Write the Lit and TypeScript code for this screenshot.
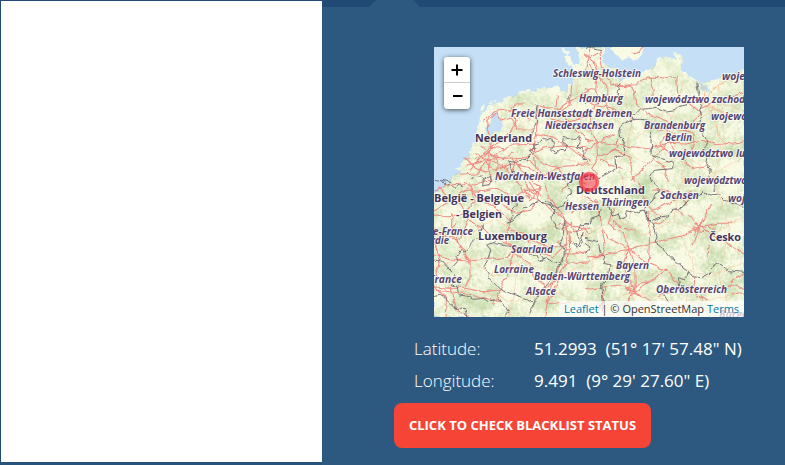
import { LitElement, html, svg, css } from "lit";
import { customElement } from "lit/decorators.js";

// Label: text, x start, baseline, drawn width
type Label = [string, number, number, number];

const regions: Label[] = [
  ["Schleswig-Holstein", 119, 30, 88],
  ["Hamburg", 145, 55, 44],
  ["Freie Hansestadt Bremen", 77, 70, 121],
  ["Niedersachsen", 111, 82, 69],
  ["Nordrhein-Westfalen", 61, 133, 100],
  ["Hessen", 131, 163, 34],
  ["Thüringen", 167, 159, 48],
  ["Sachsen", 226, 152, 39],
  ["Brandenburg", 210, 82, 61],
  ["Berlin", 231, 94, 27],
  ["województwo zachod", 211, 56, 100],
  ["woje", 288, 33, 23],
  ["wojewó", 277, 73, 36],
  ["województwo lu", 235, 110, 76],
  ["województwo", 250, 137, 63],
  ["woj", 294, 155, 17],
  ["e-France", -1, 188, 40],
  ["rdie", -3, 197, 18],
  ["Saarland", 77, 206, 42],
  ["Lorraine", 60, 226, 40],
  ["Alsace", 92, 248, 30],
  ["Baden-Württemberg", 100, 233, 96],
  ["France", -5, 236, 33],
  ["Bayern", 182, 222, 33],
  ["Oberösterreich", 222, 246, 71],
  ["Burgenl", 285, 271, 38],
];

const countries: Label[] = [
  ["Nederland", 41, 95, 57],
  ["Deutschland", 142, 147, 69],
  ["België - Belgique", 0, 155, 90],
  ["- Belgien", 22, 171, 46],
  ["Luxembourg", 44, 193, 69],
  ["Česko", 275, 194, 32],
];

// Each sheet of the map is drawn at three units per pixel
const sheets = [
  {
    at: "translate(-4 -5) scale(.33333)",
    roads: `M160 238 195 208 230 204 275 215 302 235 M202 206 212 235 240 225 260 250 M175 235 172 262 185 300 176 330 140 350 100 348
      M172 240 200 212 M240 210 256 185 286 186 M318 187 350 200 378 192 382 160 M320 190 320 275 310 320 318 380
      M425 130 420 190 395 205 376 200 M250 215 260 260 310 262 M260 235 230 290 185 312 176 330
      M176 330 212 350 245 348 290 345 340 318 400 312 480 318 M110 370 150 360 176 330 196 340 240 310 320 306
      M105 350 130 372 165 390 210 380 240 365 290 375 340 400 400 370 480 365
      M130 370 175 350 230 380 260 420 M176 330 180 415 M150 310 202 350 200 420 M120 385 150 350 175 315 225 320
      M90 400 142 395 176 350 220 350 250 330 M140 335 190 380 220 415 M245 345 275 385 310 420 M260 350 235 415
      M290 345 330 390 325 420 M300 320 330 360 380 375 410 420 M320 275 370 285 420 320 480 355
      M400 220 432 260 480 300 M340 190 360 230 400 240 480 220 M380 205 440 165 480 145`,
    borders: `M240 378 236 358 260 361 275 350 292 354 304 335 297 326 315 320 310 307 330 302 338 290 350 294 364 288 370 303 365 325 378 335 395 322 405 324 410 308 397 299 400 286 425 292 445 284 452 298 443 315 460 322 457 344 475 360
      M240 378 252 395 260 405 M318 187 315 210 320 240 310 265 308 283 288 290 M420 158 414 164 418 174 410 174
      M12 416 38 412 65 420 M125 414 130 404 155 402 162 415 178 403 182 420`,
  },
  {
    at: "translate(151 -5) scale(.33333)",
    roads: `M0 35 28 60 40 100 65 132 66 160 30 190 0 178 M15 15 10 60 35 105 32 150 M45 25 48 75 80 130 108 122
      M80 132 150 128 192 105 240 108 275 103 278 155 M90 135 140 132 150 158 152 190 185 215 240 232 265 260
      M195 105 208 145 200 165 M35 188 80 198 120 215 150 235 M30 190 10 250 35 298 100 310 190 320 250 304 300 306 350 295 390 308 477 300
      M35 298 0 292 M35 298 38 352 20 380 45 408 M38 345 90 325 135 345 145 420 M35 300 0 330 M35 300 90 275 M98 290 97 318 65 335
      M190 260 240 262 290 290 310 250 350 215 310 180 M250 300 285 340 320 380 370 370 M250 300 205 350 160 395 135 415
      M265 260 320 270 330 305 300 340 M345 200 400 178 477 150
      M205 350 240 380 250 420 M250 270 225 305 250 335 325 340
      M48 350 75 370 120 380 M0 140 30 145 60 185 80 225 M140 35 165 26 178 15 M45 30 10 50 0 90`,
    minor: "M365 190 390 230 400 280 430 310 M370 170 382 140 440 110 477 95 M350 190 362 145 345 125 M365 190 430 215 477 230",
    borders: `M0 15 10 20 25 17 48 23 M108 124 98 132 104 142 96 151 106 160 92 165 70 178 62 170 40 182 25 180 0 185
      M135 213 150 218 165 202 190 200 215 196 225 204 245 210 270 206 285 190 320 182 340 173
      M335 122 340 150 338 167 350 190 344 205 350 225 345 243 358 263 354 277 368 298 362 320 370 340 365 365 376 380 370 420
      M136 213 145 233 115 245 100 258 104 285 115 290 119 330 110 342 90 344 92 380 70 395 40 408
      M145 232 170 232 190 235 200 257 195 280 200 310 198 340 230 350 265 360 262 380 208 385 195 405 200 420`,
  },
  {
    at: "translate(-4 133) scale(.33333)",
    roads: `M12 90 55 65 110 30 160 35 200 25 250 50 300 28 335 45 M25 20 60 60 90 70 115 120 90 180 M12 30 75 10 125 15 180 0
      M65 100 65 140 100 220 120 243 M105 5 150 60 210 90 240 120 228 190 M120 20 135 60 100 100 55 110 12 105
      M220 75 260 100 300 90 320 65 330 20 M260 0 285 38 330 65 380 100 420 135 M280 0 300 30 330 30
      M298 5 320 40 302 60 285 45 M310 10 335 20 318 45 285 25 300 62 M345 10 355 50 400 110 415 150
      M12 225 65 240 120 243 165 235 230 235 255 200 235 190 M120 243 105 215 80 180 12 150
      M120 243 120 290 103 325 50 325 12 320 M105 325 160 335 208 330 230 290 250 220
      M12 318 50 355 45 410 M190 375 208 330 M60 320 80 390 120 410 M240 195 290 220 320 215 370 230 410 190 415 145
      M410 130 412 180 405 225 385 265 355 350 345 410 M420 150 422 205 412 245 390 280 378 330 350 370
      M395 150 425 130 435 160 M380 185 420 215 M300 180 360 200 400 200 M405 225 470 215 M415 160 480 145
      M302 190 280 160 240 150 M240 195 190 175 160 145 120 120 M412 250 480 245 M252 220 300 250 310 290 350 320 385 300
      M12 160 50 165 78 130 M12 180 30 240 15 290 M12 330 100 340 210 365 M420 100 480 65 M430 135 480 160
      M420 5 395 35 M435 0 470 15 M410 130 385 135 M350 370 420 370`,
    borders: `M38 0 45 15 60 12 75 25 85 13 100 20 M160 0 158 18 175 14 190 0 M225 45 240 65 260 60 262 75 245 95 250 110 235 130
      M195 185 170 195 183 210 165 260 180 298 210 325 240 340 285 355 310 370
      M158 132 160 145 145 155 148 172 130 178 125 195 105 215 90 212 80 232 82 245 65 265 M12 240 35 243 60 270 75 285 68 315 85 320 88 345 110 348 130 358 160 355 175 365 200 358 220 370 235 395 225 410
      M12 350 35 345 60 370 75 385 105 385 110 410 M230 130 250 122 280 85 325 65 360 75 375 90 362 112 385 145
      M425 0 415 15 425 38 410 50 415 65 385 85 360 72 345 60 M190 190 230 198 290 205 300 225 320 228 330 245 350 235 390 252
      M300 205 325 215 345 240 M395 255 382 260 375 290 325 340 310 370 300 400 M405 120 400 160 390 185 403 215 400 240 385 260
      M480 130 448 135 440 155 448 180 440 205 425 180 M460 160 450 200 430 185`,
  },
  {
    at: "translate(151 133) scale(.33333)",
    roads: `M0 50 35 65 45 120 60 190 50 230 0 230 M85 85 70 130 115 160 130 208 150 255 150 335 M188 100 195 145 190 250
      M55 150 70 175 130 208 195 190 280 170 345 140 M130 208 55 226 0 232 M130 208 115 250 150 335 M130 208 190 250 240 270 280 310
      M50 385 60 320 105 315 150 335 245 270 M60 320 0 330 M150 335 210 370 M150 335 190 305 160 310 135 340 170 345 120 325 155 315 M150 335 115 380
      M155 150 110 145 85 120 90 150 M180 100 230 80 320 35 M160 0 175 60 205 95 240 115
      M200 30 240 30 310 70 M345 140 400 130 442 130 M345 140 365 100 380 75 M345 140 325 195 M345 140 380 165 477 222
      M345 140 310 105 M345 140 322 165 M345 140 350 115 M345 140 395 145 M370 190 366 235 M270 85 295 105 M205 135 235 120
      M430 320 445 300 477 280 M440 315 477 325 M440 340 477 340 M280 320 220 350 M330 290 325 335 365 360 M345 140 330 130 325 150 360 155`,
    borders: `M0 130 20 135 18 115 45 105 50 78 70 75 80 105 100 100 105 120 125 110 120 92 155 98 175 90 180 105 200 125
      M200 125 225 110 250 108 265 88 295 85 310 60 340 50 355 35 375 45 405 42 415 60 475 80
      M180 105 205 135 217 170 210 185 235 205 255 230 290 260 308 275 320 290 350 293 375 280 390 250 410 255 430 272 477 277
      M308 275 300 300 280 293 285 325 M385 0 388 35 M205 0 220 30 205 60 175 85
      M0 175 40 185 45 220 60 230 58 250 75 255 70 290 50 315 55 365 55 390 M235 342 250 365
      M0 220 20 205 0 190 M55 365 45 380`,
  },
];

const land = "M0 146 9 139 16 133 22 126 21 122 29 120 27 115 33 111 36 104 41 93 45 77 47 66 56 58 70 54 84 47 97 45 106 41 118 42 123 38 128 43 134 46 134 38 140 38 139 31 143 28 136 18 146 16 143 0H170L168 15 176 20 183 22 181 29 187 34 201 28 215 23 222 17 223 12 234 9 243 13 239 6 248 8 249 16 246 24 256 30 265 36 280 33 310 22V270H0Z";

@customElement("country-map")
class CountryMap extends LitElement {
  static styles = css`
    :host { display: block; position: relative; width: 310px; height: 270px; overflow: hidden; }
    .map { display: block; width: 310px; height: 270px; }
    text { font-family: "Open Sans", "Noto Sans", sans-serif; stroke: #fffb; stroke-width: 2px; paint-order: stroke; stroke-linejoin: round; }
    .region { font-size: 10.6px; font-weight: 700; font-style: italic; fill: #584670; }
    .country { font-size: 11.3px; font-weight: 700; fill: #43345a; }
    .road { fill: none; stroke: #ee837e; stroke-width: 3.1; stroke-linejoin: round; opacity: .92; }
    .minor { fill: none; stroke: #f6bd94; stroke-width: 3; }
    .lane { fill: none; stroke: #f6ba91; stroke-width: .8; opacity: .6; }
    .border { fill: none; stroke: #6d6873; stroke-width: 2.7; stroke-linejoin: round; }
    .zoom { position: absolute; left: 10px; top: 10px; width: 26px; border-radius: 4px; background: #fff; box-shadow: 0 1px 5px rgba(0,0,0,.65); overflow: hidden; }
    .step { display: flex; align-items: center; justify-content: center; box-sizing: border-box; width: 26px; height: 26px; padding: 0; border: 0; background: #fff; }
    .step:first-child { border-bottom: 1px solid #ccc; }
    .credit { position: absolute; right: 0; bottom: 0; box-sizing: border-box; width: 185px; height: 16px; padding: 0 5px; background: rgba(255,255,255,.7); color: #333; font: 11px/16px "Open Sans", sans-serif; white-space: nowrap; }
    .link { color: #0078a8; }
  `;

  private label(kind: string, [text, x, y, width]: Label) {
    return svg`<text class=${kind} x=${x} y=${y} textLength=${width} lengthAdjust="spacingAndGlyphs">${text}</text>`;
  }

  render() {
    return html`
      <svg class="map" viewBox="0 0 310 270">
        <defs>
          <clipPath id="land"><path d=${land} /></clipPath>
          <filter id="woods" x="0" y="0" width="100%" height="100%" color-interpolation-filters="sRGB">
            <feTurbulence type="fractalNoise" baseFrequency=".045" numOctaves="3" seed="8" result="broad" />
            <feTurbulence type="fractalNoise" baseFrequency=".3" numOctaves="3" seed="3" result="fine" />
            <feComposite in="broad" in2="fine" operator="arithmetic" k2=".65" k3=".35" />
            <feColorMatrix values="0 0 0 0 .7  0 0 0 0 .81  0 0 0 0 .59  2.8 0 0 0 -1.15" />
          </filter>
          <filter id="wiggle" filterUnits="userSpaceOnUse" x="0" y="0" width="310" height="270" color-interpolation-filters="sRGB">
            <feTurbulence type="fractalNoise" baseFrequency=".13" numOctaves="2" seed="5" />
            <feDisplacementMap in="SourceGraphic" scale="5" xChannelSelector="R" yChannelSelector="G" />
          </filter>
          <linearGradient id="fade" x1="0" y1="0" x2=".25" y2="1">
            <stop offset=".15" stop-color="#aaa" /><stop offset=".6" stop-color="#fff" />
          </linearGradient>
          <mask id="density"><rect width="310" height="270" fill="url(#fade)" /></mask>
        </defs>
        <rect width="310" height="270" fill="#c5dff6" />
        <g filter="url(#wiggle)">
          <path d=${land} fill="#f9fae4" />
          <path d="M46 65 47 60 51 57 52 59ZM55 56 62 53 63 54 56 57ZM68 52 77 49 78 50 70 53ZM83 46 95 43 98 44 86 47ZM101 42 111 39 112 41ZM129 10 135 9 139 17 134 19ZM128 0 136 5 133 9ZM177 0H210L208 8 200 14 194 9 188 13 182 7Z" fill="#f9fae4" />
          <path d="M264 36 273 38 275 45 268 44ZM15 124 22 122 28 125 20 128ZM10 134 17 130 16 137Z" fill="#c5dff6" />
        </g>
        <g clip-path="url(#land)">
          <g mask="url(#density)"><rect width="310" height="270" filter="url(#woods)" opacity=".8" /></g>
        </g>
        <path d="M57 67 61 65 64 68 69 78 66 85 60 84 58 88 53 87 51 81 57 76Z" fill="#c5dff6" />
        <g filter="url(#wiggle)">
          <path class="lane" d="M60 100 85 79 110 90 130 67 155 85 180 72 205 90 230 65 260 80 285 55 310 64M48 140 75 120 110 131 130 112 160 118 190 105 220 120 250 108 280 127 310 110M0 180 30 190 60 172 90 188 120 178 150 190 180 171 210 188 240 174 275 190 310 170M0 220 35 210 60 230 90 215 130 227 165 210 200 235 240 218 275 230 310 215M0 250 40 242 80 255 120 245 160 260 200 245 250 258 310 245M75 58 90 80 82 110 95 145 70 180 85 220 75 270M145 30 140 80 155 120 145 170 160 210 150 270M190 37 198 80 185 120 197 160 190 220 205 270M250 35 235 80 250 120 240 170 260 220 248 270M285 35 290 90 280 130 295 180 285 230 298 270" />
          ${sheets.map((s) => svg`<g transform=${s.at}><path class="minor" d=${s.minor ?? ""} /><path class="road" d=${s.roads} /><path class="border" d=${s.borders} /></g>`)}
        </g>
        ${regions.map((l) => this.label("region", l))}
        ${countries.map((l) => this.label("country", l))}
        <circle cx="155" cy="135" r="8.5" fill="#f8283c" fill-opacity=".5" stroke="#fa3040" stroke-width="3.5" stroke-opacity=".65" />
        <path d="m150 132 5-2 5 3-3 6-4-1Z" fill="none" stroke="#ff8490" opacity=".8" />
      </svg>
      <div class="zoom">
        <button class="step" aria-label="Zoom in"><svg width="12" height="12"><path d="M.5 6h11M6 .5v11" stroke="#000" stroke-width="2" /></svg></button>
        <button class="step" aria-label="Zoom out"><svg width="12" height="12"><path d="M2 6h9.5" stroke="#000" stroke-width="2" /></svg></button>
      </div>
      <div class="credit"><span class="link">Leaflet</span> | © OpenStreetMap <span class="link">Terms</span></div>
    `;
  }
}

@customElement("app-root")
class AppRoot extends LitElement {
  static styles = css`
    :host { display: flex; box-sizing: border-box; width: 785px; height: 465px; background: #2d5980; color: #fff; font-family: "Open Sans", sans-serif; overflow: hidden; }
    .left { box-sizing: border-box; width: 322px; height: 465px; border: solid #204a74; border-width: 1px 0 0 1px; border-bottom: 3px solid #28547c; }
    .blank { height: 100%; background: #fff; }
    .right { width: 463px; }
    .tabs { display: block; width: 463px; height: 7px; }
    .place { margin: 40px 0 0 112px; }
    .rows { margin: 16px 0 0 92px; font-size: 17px; line-height: 32px; }
    .row { display: grid; grid-template-columns: 120px 1fr; height: 32px; white-space: pre; }
    .name { font-weight: 350; }
    .check { display: flex; align-items: center; justify-content: center; margin: 6px 0 0 72px; width: 257px; height: 45px; padding: 0 0 1px; border: 0; border-radius: 8px; background: #f64436; color: #fff; font: 700 13px "Open Sans", sans-serif; white-space: nowrap; }
  `;

  render() {
    return html`
      <div class="left"><div class="blank"></div></div>
      <div class="right">
        <svg class="tabs" viewBox="0 0 463 7"><path d="M0 0H54L47 7H0ZM91 0H463V7H98Z" fill="#204a74" /></svg>
        <country-map class="place"></country-map>
        <div class="rows">
          <div class="row"><span class="name">Latitude:</span><span>51.2993  (51° 17' 57.48" N)</span></div>
          <div class="row"><span class="name">Longitude:</span><span>9.491  (9° 29' 27.60" E)</span></div>
        </div>
        <button class="check">CLICK TO CHECK BLACKLIST STATUS</button>
      </div>
    `;
  }
}
